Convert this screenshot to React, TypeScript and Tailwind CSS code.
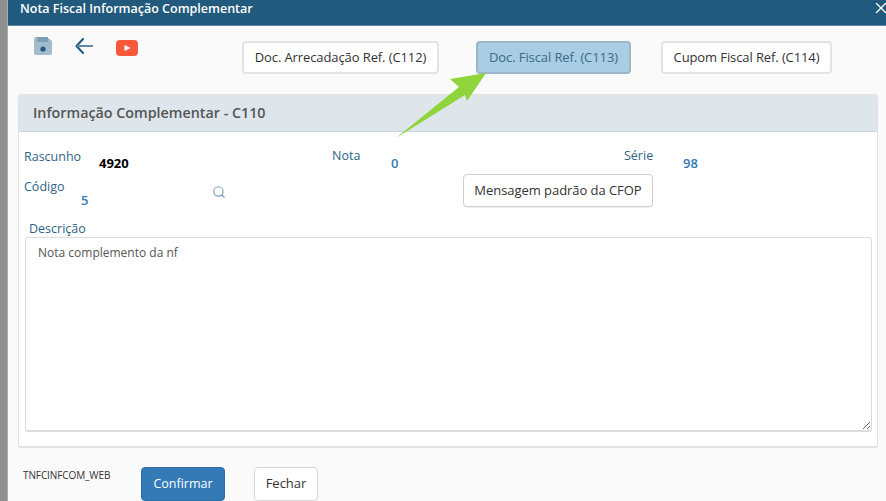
import { Search, X } from 'lucide-react'

const font = { fontFamily: '"Open Sans", "Noto Sans", sans-serif' }

function RefButton({ label, active, className }: { label: string; active?: boolean; className: string }) {
  return (
    <button
      className={`h-[33px] rounded-[4px] border-2 text-[13px] tracking-[-0.1px] ${
        active ? 'bg-[#a9cde3] border-[#9db6c6] text-[#3b6a8a]' : 'bg-white border-[#e3e3e3] text-[#333]'
      } ${className}`}
    >
      {label}
    </button>
  )
}

function Label({ text, className }: { text: string; className: string }) {
  return <span className={`text-[12.5px] leading-[18px] text-[#2f6484] ${className}`}>{text}</span>
}

function Value({ text, className }: { text: string; className: string }) {
  return <span className={`text-[13px] leading-[18px] font-semibold text-[#337ab7] ${className}`}>{text}</span>
}

export default function App() {
  return (
    <div style={font} className="relative flex w-[886px] h-[501px] overflow-hidden bg-[#fafafa]">
      <div className="w-[8px] shrink-0 bg-[#8f8f8f] border-r border-[#a8a8a8]" />
      <div className="flex-1 flex flex-col min-w-0">
        <div className="h-[26px] shrink-0 flex items-start justify-between bg-[#215a7c] border-b border-[#5f8ba5] pl-[12px]">
          <span className="text-[12.5px] font-semibold text-white leading-[18px]">Nota Fiscal Informação Complementar</span>
          <X size={18} strokeWidth={1.8} className="text-white -mr-[4px] -mt-[1px] shrink-0" />
        </div>

        <div className="h-[68px] shrink-0 flex items-start">
          {/* toolbar icons */}
          <div className="flex items-start w-[234px] pl-[26px] pt-[11px]">
            <svg width="18" height="18" viewBox="0 0 18 18" className="block">
              <path d="M2 0h11l5 4v12a2 2 0 0 1-2 2H2a2 2 0 0 1-2-2V2a2 2 0 0 1 2-2z" fill="#a3bccd" />
              <rect x="3" y="0" width="11" height="5" fill="#7f9fb5" />
              <circle cx="9" cy="12" r="2.6" fill="#28587a" />
            </svg>
            <svg width="18" height="16" viewBox="0 0 18 16" fill="none" className="block ml-[23px] mt-[1px]">
              <path d="M8 1L1.5 8L8 15" stroke="#1f5a80" strokeWidth="2" strokeLinecap="round" strokeLinejoin="round" />
              <path d="M2 8H18" stroke="#5f8aa6" strokeWidth="2" />
            </svg>
            <svg width="22" height="16" viewBox="0 0 22 16" className="block ml-[23px] mt-[3px]">
              <rect width="22" height="16" rx="4" fill="#f7593a" />
              <path d="M8.5 5l6 3-6 3z" fill="#fff" />
            </svg>
          </div>
          <div className="flex pt-[15px]">
            <RefButton label="Doc. Arrecadação Ref. (C112)" className="w-[197px]" />
            <RefButton label="Doc. Fiscal Ref. (C113)" active className="w-[155px] ml-[37px]" />
            <RefButton label="Cupom Fiscal Ref. (C114)" className="w-[171px] ml-[30px]" />
          </div>
        </div>

        <div className="ml-[10px] w-[860px] h-[354px] shrink-0 flex flex-col rounded-[3px] border border-[#e2e2e2] border-b-2 bg-white">
          <div className="h-[37px] shrink-0 flex items-center bg-[#dee5eb] border-b border-[#c5d8e8] pl-[14px] rounded-t-[3px]">
            <span className="text-[14.3px] font-semibold text-[#555]">Informação Complementar - C110</span>
          </div>

          <div className="flex h-[43px] shrink-0 pl-[5px]">
            <Label text="Rascunho" className="w-[75px] pt-[16px]" />
            <span className="w-[233px] pt-[22px] text-[13px] leading-[18px] font-bold text-black">4920</span>
            <Label text="Nota" className="w-[59px] pt-[15px]" />
            <Value text="0" className="w-[233px] pt-[22px]" />
            <Label text="Série" className="w-[59px] pt-[15px]" />
            <Value text="98" className="pt-[22px]" />
          </div>

          <div className="flex h-[37px] shrink-0 pl-[5px]">
            <Label text="Código" className="w-[57px] pt-[3px]" />
            <Value text="5" className="w-[131px] pt-[16px]" />
            <Search size={14} strokeWidth={2} className="mt-[10px] text-[#7ea3b8]" />
            <button className="ml-[237px] h-[33px] w-[190px] rounded-[4px] border border-[#d0d0d0] bg-white text-[13px] tracking-[-0.05px] text-[#333] -mt-[1px] shadow-[0_1px_1px_#eee]">
              Mensagem padrão da CFOP
            </button>
          </div>

          <div className="flex-1 flex flex-col pl-[6px] pr-[5px] pb-[14px] min-h-0">
            <Label text="Descrição" className="pl-[4px] pt-[8px] h-[25px] shrink-0" />
            <textarea
              defaultValue="Nota complemento da nf"
              className="flex-1 w-full rounded-[3px] border border-[#dcdcdc] border-b-2 bg-white px-[12px] py-[6px] text-[12px] leading-[18px] text-[#555] outline-none"
            />
          </div>
        </div>

        <div className="flex items-start pl-[15px]">
          <span className="w-[118px] pt-[20px] text-[10px] leading-[14px] text-[#333] tracking-[-0.1px]">TNFCINFCOM_WEB</span>
          <button className="mt-[19px] w-[84px] h-[34px] rounded-[4px] bg-[#337ab7] border border-[#2e6da4] text-[12.5px] font-medium text-white">
            Confirmar
          </button>
          <button className="mt-[19px] ml-[29px] w-[64px] h-[34px] rounded-[4px] border border-[#d6d6d6] bg-white text-[13px] text-[#333]">
            Fechar
          </button>
        </div>
      </div>

      {/* green callout arrow over the page */}
      <svg width="100" height="75" viewBox="0 0 100 75" className="absolute left-[390px] top-[68px]">
        <path d="M6 70 L69 19 L60 11 L96 5 L77 33 L75 27 Q35 52 6 70z" fill="#8fd43a" />
      </svg>
    </div>
  )
}
